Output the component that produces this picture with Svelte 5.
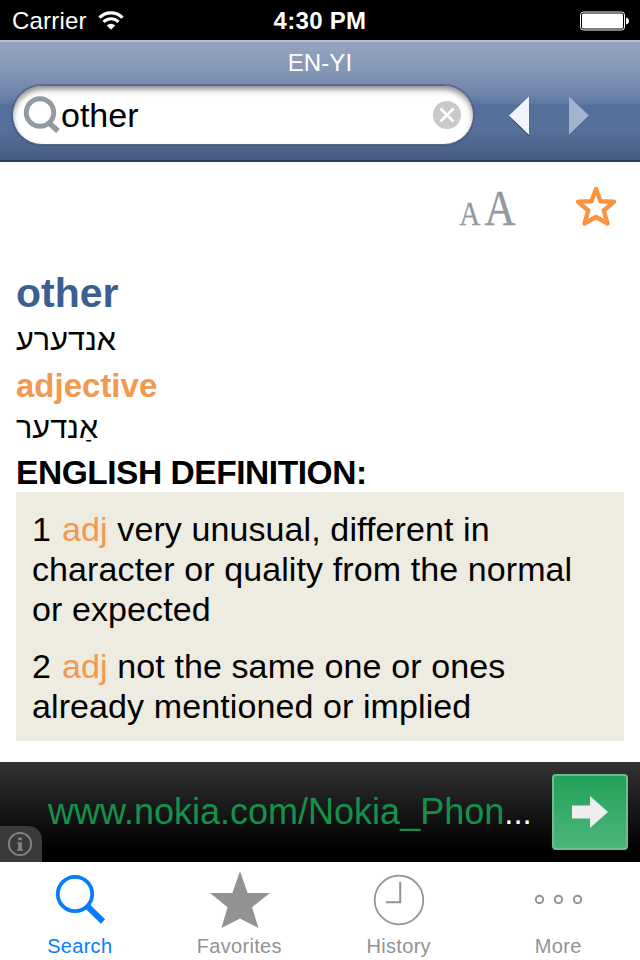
<script lang="ts">
  interface Sense {
    n: number;
    pos: string;
    text: string;
  }

  const senses: Sense[] = [
    { n: 1, pos: 'adj', text: 'very unusual, different in character or quality from the normal or expected' },
    { n: 2, pos: 'adj', text: 'not the same one or ones already mentioned or implied' },
  ];

  const tabs = ['Search', 'Favorites', 'History', 'More'];

  let query = $state('other');
  let active = $state('Search');
</script>

<div class="screen">
  <div class="status">
    <div class="carrier">
      <span>Carrier</span>
      <svg width="26" height="20" viewBox="0 0 26 20">
        <path d="M1.500 6.600a16.300 16.300 0 0 1 23 0" fill="none" stroke="#fff" stroke-width="3.300" />
        <path d="M5.500 10.900a10.600 10.600 0 0 1 15 0" fill="none" stroke="#fff" stroke-width="3" />
        <path d="M13 18.700l-4.200-4.200a6 6 0 0 1 8.400 0z" fill="#fff" />
      </svg>
    </div>
    <span class="time">4:30 PM</span>
    <svg class="battery" width="50" height="20" viewBox="0 0 50 20">
      <rect x="0.500" y="1" width="44" height="18" rx="3" fill="none" stroke="#fff" />
      <rect x="2" y="2.500" width="41" height="15" rx="1.500" fill="#fff" />
      <path d="M46 6.500v7c1.800-.4 3-1.800 3-3.500s-1.200-3.100-3-3.500z" fill="#fff" />
    </svg>
  </div>

  <header>
    <div class="pair">EN-YI</div>
    <div class="tools">
      <div class="field">
        <svg width="37" height="37" viewBox="0 0 37 37">
          <circle cx="16" cy="15.500" r="13.700" fill="none" stroke="#92999f" stroke-width="5" />
          <path d="M24.500 25.500L34 34" stroke="#92999f" stroke-width="5.500" />
        </svg>
        <input bind:value={query} aria-label="Search word" />
        <button class="clear" type="button" aria-label="Clear" onclick={() => (query = '')}>
          <svg width="28" height="28" viewBox="0 0 28 28">
            <circle cx="14" cy="14" r="14" fill="#c9c9c9" />
            <path d="M7.500 7.500l13 13M20.500 7.500l-13 13" stroke="#fff" stroke-width="2.500" />
          </svg>
        </button>
      </div>
      <svg class="arrows" width="84" height="42" viewBox="0 0 84 42">
        <path d="M2 21.500L22 41V38z" fill="#1c2a40" />
        <path d="M22 1.500v38.500L2 20.500z" fill="#eff4fd" />
        <path d="M62 41L82 21.500V20L62 39z" fill="#3c5278" />
        <path d="M62 1.500v38.500L82 20.500z" fill="#a3b2cd" />
      </svg>
    </div>
  </header>

  <main>
    <div class="actions">
      <div class="sizes"><span class="small">A</span><span class="large">A</span></div>
      <svg width="42" height="41" viewBox="0 0 42 41">
        <path
          d="M21 3L25.500 15.200L39 15.800L28.800 24.500L32.500 37.500L21 31L9.500 37.500L13.200 24.500L3 15.800L16.500 15.200Z"
          fill="none" stroke="#fb923f" stroke-width="4.400" stroke-linejoin="round"
        />
      </svg>
    </div>

    <h1>other</h1>
    <p class="yi first"><bdi lang="yi">אנדערע</bdi></p>
    <h2>adjective</h2>
    <p class="yi second"><bdi lang="yi">אַנדער</bdi></p>
    <h3>ENGLISH DEFINITION:</h3>
    <div class="definitions">
      {#each senses as s (s.n)}
        <p>{s.n} <span class="pos">{s.pos}</span> {s.text}</p>
      {/each}
    </div>
  </main>

  <div class="ad">
    <div class="url">www.nokia.com/Nokia_Phon<span>...</span></div>
    <div class="go">
      <svg width="36" height="32" viewBox="0 0 36 32">
        <path d="M0 9.500h18V0l18 16-18 16v-9.500H0z" fill="#eee" />
      </svg>
    </div>
    <div class="info">
      <svg width="26" height="26" viewBox="0 0 26 26">
        <circle cx="13" cy="13" r="11.200" fill="none" stroke="#858585" stroke-width="1.800" />
        <path d="M11.200 6.500h3.600v2.800h-3.600zM10.200 11.200h4.600v7h1.200v1.600h-6v-1.600h1.200v-5.400h-1z" fill="#858585" />
      </svg>
    </div>
  </div>

  <nav>
    {#each tabs as tab (tab)}
      <button type="button" class:active={active === tab} onclick={() => (active = tab)}>
        <svg width="62" height="62" viewBox="0 0 62 62">
          {#if tab === 'Search'}
            <circle cx="26" cy="32" r="17.200" fill="none" stroke="currentColor" stroke-width="3.800" />
            <path d="M37.500 43.500L54 59.500" stroke="currentColor" stroke-width="6" />
          {:else if tab === 'Favorites'}
            <path d="M32 9L39.600 31H62L44 45.300L50.500 66L32 56.500L13.500 66L19.500 45.300L2 31H24.400Z" fill="currentColor" />
          {:else if tab === 'History'}
            <circle cx="31" cy="38" r="24.300" fill="none" stroke="currentColor" stroke-width="1.700" />
            <path d="M32.200 20v20.200H18" fill="none" stroke="currentColor" stroke-width="2" />
          {:else}
            <g fill="none" stroke="currentColor" stroke-width="2">
              <circle cx="12.500" cy="37.500" r="3.700" />
              <circle cx="31.500" cy="37.500" r="3.700" />
              <circle cx="50.500" cy="37.500" r="3.700" />
            </g>
          {/if}
        </svg>
        <span>{tab}</span>
      </button>
    {/each}
  </nav>
</div>

<style>
  :global(body) {
    margin: 0;
    background: #fff;
  }
  .screen {
    width: 640px;
    height: 960px;
    display: flex;
    flex-direction: column;
    overflow: hidden;
    font-family: 'Liberation Sans', Arial, sans-serif;
    color: #000;
  }
  svg {
    display: block;
    overflow: visible;
    flex: none;
  }
  button {
    padding: 0;
    border: 0;
    background: none;
    font: inherit;
  }

  .status {
    box-sizing: border-box;
    height: 40px;
    padding: 0 12px;
    display: grid;
    grid-template-columns: 1fr auto 1fr;
    align-items: center;
    background: #000;
    color: #fff;
    font-size: 24px;
    line-height: 41px;
  }
  .carrier {
    display: flex;
    align-items: center;
    gap: 11px;
    letter-spacing: 0.2px;
  }
  .time {
    font-weight: 700;
    letter-spacing: 0.3px;
  }
  .battery {
    justify-self: end;
    margin-right: -2px;
  }

  header {
    box-sizing: border-box;
    height: 122px;
    border-top: 2px solid #b3bfd3;
    border-bottom: 2px solid #2c3b57;
    background: linear-gradient(#95a4c0 0%, #8496b6 25%, #6d83ab 45%, #5d77a2 52%, #546e9a 54%, #56709b 75%, #4a5f87 95%, #455a82 100%);
  }
  .pair {
    height: 43px;
    line-height: 42px;
    text-align: center;
    color: #fff;
    font-size: 24px;
    letter-spacing: 0.1px;
  }
  .tools {
    display: flex;
    padding-left: 12px;
  }
  .field {
    box-sizing: border-box;
    width: 462px;
    height: 60px;
    padding: 0 12px 0 11px;
    display: flex;
    align-items: center;
    border: 1px solid #566683;
    border-radius: 30px;
    background: #fff;
    box-shadow: inset 0 4px 6px -1px rgba(0, 0, 0, 0.5), 0 0 0 1px rgba(60, 78, 112, 0.5);
  }
  input {
    flex: 1;
    min-width: 0;
    padding: 0;
    border: 0;
    outline: 0;
    background: none;
    font: 34px/40px 'Liberation Sans', Arial, sans-serif;
    color: #000;
  }
  .arrows {
    margin: 10px 0 0 33px;
  }

  main {
    box-sizing: border-box;
    height: 600px;
    padding: 0 16px;
  }
  .actions {
    height: 104px;
    display: flex;
    justify-content: flex-end;
    padding: 24px 7px 0 0;
    box-sizing: border-box;
  }
  .sizes {
    display: flex;
    align-items: baseline;
    gap: 5px;
    margin-right: 59px;
    height: 40px;
    font-family: 'Liberation Serif', 'Times New Roman', serif;
    color: #92999f;
    line-height: 44px;
    /* tall, narrow capitals */
    transform: scaleX(0.86);
    transform-origin: right;
  }
  .small {
    font-size: 34px;
    -webkit-text-stroke: 0.3px #92999f;
  }
  .large {
    font-size: 50px;
    -webkit-text-stroke: 0.4px #92999f;
  }
  h1, h2, h3, p {
    margin: 0;
  }
  h1 {
    height: 52px;
    font-size: 41px;
    line-height: 54px;
    color: #3b5f91;
  }
  h2 {
    height: 40px;
    font-size: 33px;
    line-height: 39px;
    color: #f2994f;
  }
  h3 {
    height: 40px;
    font-size: 33.500px;
    line-height: 42px;
    letter-spacing: -0.450px;
  }
  .yi {
    font-size: 30.600px;
    line-height: 42px;
  }
  .first {
    height: 48px;
  }
  .second {
    height: 46px;
  }
  .definitions {
    box-sizing: border-box;
    height: 249px;
    padding: 17px 16px 0;
    background: #eeebe0;
    font-size: 34px;
    line-height: 40px;
    letter-spacing: 0.100px;
  }
  .definitions p + p {
    margin-top: 17px;
  }
  .pos {
    margin-left: 1.500px;
    color: #f2994f;
  }

  .ad {
    position: relative;
    box-sizing: border-box;
    height: 100px;
    padding: 0 12px 0 48px;
    display: flex;
    align-items: center;
    justify-content: space-between;
    background: linear-gradient(#333, #000 88%);
  }
  .url {
    font-size: 36px;
    line-height: 40px;
    color: #14924a;
    white-space: nowrap;
  }
  .url span {
    color: #fff;
    font-size: 33px;
  }
  .go {
    box-sizing: border-box;
    width: 76px;
    height: 76px;
    display: grid;
    place-items: center;
    border: 2px solid #6dbd90;
    border-radius: 4px;
    background: linear-gradient(#21a159, #4eb57b);
  }
  .info {
    position: absolute;
    left: 0;
    bottom: 0;
    width: 42px;
    height: 36px;
    display: grid;
    place-items: center;
    padding-right: 2px;
    box-sizing: border-box;
    border-top-right-radius: 14px;
    background: #3a3a3a;
  }

  nav {
    width: 638px;
    height: 98px;
    display: grid;
    grid-template-columns: repeat(4, 1fr);
    background: #fff;
  }
  nav button {
    display: flex;
    flex-direction: column;
    align-items: center;
    color: #929292;
    font-size: 20px;
    letter-spacing: 0.300px;
    line-height: 24px;
    gap: 10px;
  }
  nav button.active {
    color: #087cff;
  }
</style>
